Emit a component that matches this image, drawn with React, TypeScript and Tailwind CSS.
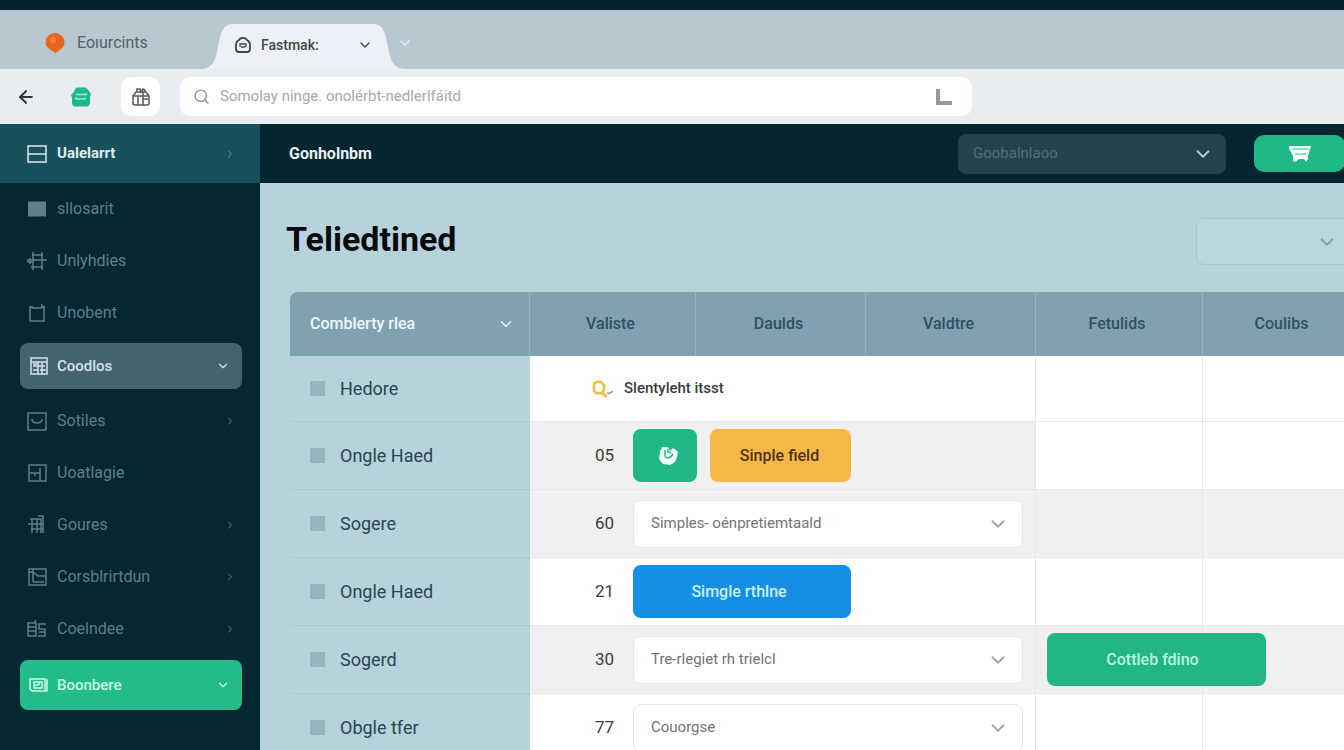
import { ArrowLeft, ChevronDown, ChevronRight, Search } from "lucide-react";
import type { ReactNode } from "react";

type IconProps = { children: ReactNode; className?: string };

const Icon = ({ children, className = "" }: IconProps) => (
    <svg viewBox="0 0 20 20" fill="none" stroke="currentColor" strokeWidth="1.5" className={`size-5 shrink-0 ${className}`} aria-hidden="true">
        {children}
    </svg>
);

const menu = [
    {
        label: "sllosarit",
        arrow: false,
        icon: <path d="M1 2.5h18v15h-3l-1-1-1 1H1z" fill="currentColor" stroke="none" />,
    },
    {
        label: "Unlyhdies",
        arrow: false,
        icon: <path d="M0 9h20M0 11h6M5 4h11M4 16h12M6 1v18M15 1v18M3 7v6" />,
    },
    {
        label: "Unobent",
        arrow: false,
        icon: <path d="M3 3v15h14V3M2 4h4M14 4h4M4 4l2 1h8l2-1M15 1v4" />,
    },
    {
        label: "Coodlos",
        arrow: true,
        box: "gray",
        icon: <path d="M2 2h16v16H2zM2 6h16M4 10h12M4 14h6M9 6v12M13 6v12M11 14h6M4 8h4" />,
    },
    {
        label: "Sotiles",
        arrow: true,
        icon: <path d="M1 2h18v17H1zM5 8c0 3 2 4 5 4s5-1 5-4" />,
    },
    {
        label: "Uoatlagie",
        arrow: false,
        icon: <path d="M2 2h17v16H2zM2 10h11M13 5v13M8 10v3" />,
    },
    {
        label: "Goures",
        arrow: true,
        icon: <path d="M3 4h11v14M5 4v14M1 9h15M4 14h12M10 4v14M11 1h5v17" />,
    },
    {
        label: "Corsblrirtdun",
        arrow: true,
        icon: <path d="M2 2h17v16H2zM6 2v13M6 5l5 4h8M6 15h11M2 5h4" />,
    },
    {
        label: "Coelndee",
        arrow: true,
        icon: <path d="M1 4h8v13H1zM1 8h8M1 12h8M8 1v3M19 5h-7v5h6v7h-7M12 13h6" />,
    },
    {
        label: "Boonbere",
        arrow: true,
        box: "green",
        icon: <path d="M1 4h15v12H3l-2-2zM18 4v12h-3M5 7h8v6H5zM5 10h5M10 7v3" />,
    },
];

const Sidebar = () => {
    return (
        <nav className="flex w-[260px] shrink-0 flex-col bg-[#052731]" aria-label="Main">
            <a href="#" className="flex h-[59px] shrink-0 items-center gap-2.5 bg-[#19505e] pr-[24px] pl-[27px] text-[#dcecef]">
                <Icon><path d="M1 2h18v16H1zM1 10h18" /></Icon>
                <span className="flex-1 text-[15px] font-bold">Ualelarrt</span>
                <ChevronRight size={12} className="text-[#6f9aa5]" />
            </a>
            {menu.map((item) => {
                if (item.box) {
                    const look = item.box === "green" ? "mt-[5px] h-[50px] bg-[#23bb89] text-[#c9fbe5]" : "mt-1 mb-1.5 h-[46px] bg-[#43636f] text-[#d5e3e7]";
                    return (
                        <a key={item.label} href="#" className={`mr-[18px] ml-5 flex shrink-0 items-center gap-2 rounded-lg pr-3 pl-[9px] ${look}`}>
                            <Icon>{item.icon}</Icon>
                            <span className="flex-1 text-[15px] font-medium">{item.label}</span>
                            <ChevronDown size={14} />
                        </a>
                    );
                }
                return (
                    <a key={item.label} href="#" className="flex h-[52px] shrink-0 items-center gap-2.5 pr-[24px] pl-[27px] text-[#5d7f89]">
                        <Icon>{item.icon}</Icon>
                        <span className="flex-1 text-base">{item.label}</span>
                        {item.arrow && <ChevronRight size={12} />}
                    </a>
                );
            })}
        </nav>
    );
};

const BrowserTabs = () => {
    return (
        <div className="flex h-[59px] shrink-0 items-end bg-[#b7c8d0]">
            <button className="flex h-[52px] w-[201px] items-center gap-3 pl-[45px] text-base text-[#53616a]">
                <svg viewBox="0 0 20 20" className="size-5" aria-hidden="true">
                    <path d="M10 0a9.5 9.5 0 0 1 9.500 9.5c0 5-4 6.5-6 8.5l-3 2-3-2c-3-2-7-4-7-8.500A9.5 9.5 0 0 1 10 0z" fill="#e9641c" />
                    <circle cx="8" cy="7" r="3" fill="#f3853f" />
                </svg>
                Eoıurcints
            </button>
            <div className="flex h-[45px] text-[#3f474d]">
                <svg viewBox="0 0 32 45" className="h-[45px] w-8" aria-hidden="true">
                    <path d="M0 45C10 45 14 38 16 28 19 12 20 0 32 0v45z" fill="#edf0f6" />
                </svg>
                <button className="flex w-[140px] items-center bg-[#edf0f6] pb-1">
                    <svg viewBox="0 0 16 16" fill="none" stroke="currentColor" strokeWidth="1.8" className="ml-0.5 size-4" aria-hidden="true">
                        <path d="M4 3C6 0 10 0 12 3c2 1 3 2 3 5v4c0 2-1 3-3 3H4c-2 0-3-1-3-3V8c0-3 1-4 3-5z" />
                        <path d="M5 10V7h6v2l-2 1H6" strokeWidth="1.3" />
                    </svg>
                    <span className="ml-2.5 flex-1 text-left text-sm font-medium">Fastmak:</span>
                    <ChevronDown size={16} />
                </button>
                <svg viewBox="0 0 32 45" className="h-[45px] w-8" aria-hidden="true">
                    <path d="M32 45C22 45 18 38 16 28 13 12 12 0 0 0v45z" fill="#edf0f6" />
                </svg>
            </div>
            <button className="-ml-2 flex h-[52px] items-center text-[#e8f0f4]" aria-label="All tabs">
                <ChevronDown size={16} />
            </button>
        </div>
    );
};

const Toolbar = () => {
    return (
        <div className="flex h-[55px] shrink-0 items-center bg-[#e9edf1] pr-5 pl-4">
            <button aria-label="Back" className="text-[#30383d]">
                <ArrowLeft size={20} strokeWidth={2.5} />
            </button>
            <button aria-label="Store" className="ml-[35px]">
                <svg viewBox="0 0 20 20" className="size-5" aria-hidden="true">
                    <path d="M4 2l2-1.500h9L18 4l2 3-1 3v7l-2 2.500H3L1 17v-6L0 8l3-3z" fill="#1fb886" />
                    <path d="M5 7.500h10l1-1M5 10v2h9v-1.500" stroke="#a5efcf" strokeWidth="1.3" fill="none" />
                </svg>
            </button>
            <button aria-label="Packages" className="ml-[30px] flex size-[39px] items-center justify-center rounded-[10px] bg-white text-[#565b5f]">
                <svg viewBox="0 0 18 20" fill="none" stroke="currentColor" strokeWidth="1.5" className="h-5 w-[18px]" aria-hidden="true">
                    <path d="M4 5h10l3 4v8l-1 1H3l-2-1V9zM1 9h16M6 9v9M11 5v13M11 12h5M5 5V2h3l1 3 2-3 2 1v2" />
                </svg>
            </button>
            <div className="ml-5 flex h-[39px] max-w-[792px] flex-1 items-center rounded-[10px] bg-white pr-5 pl-[13px]">
                <Search size={17} className="text-[#8f9396]" />
                <input
                    type="text"
                    aria-label="Address"
                    placeholder="Somolay ninge. onolérbt-nedlerlfáitd"
                    className="ml-2.5 flex-1 text-[15px] outline-none placeholder:text-[#a6a8aa]"
                />
                <svg viewBox="0 0 16 16" className="size-4" aria-hidden="true">
                    <path d="M2 0v14h14" stroke="#97999b" strokeWidth="4" fill="none" />
                </svg>
            </div>
        </div>
    );
};

type PickerProps = { label: string; value: string; look: string; arrow: string };

const Picker = ({ label, value, look, arrow }: PickerProps) => (
    <div className="grid shrink-0 items-center">
        <select aria-label={label} className={`col-start-1 row-start-1 appearance-none rounded-lg ${look}`}>
            <option>{value}</option>
        </select>
        <ChevronDown size={22} className={`pointer-events-none col-start-1 row-start-1 justify-self-end ${arrow}`} />
    </div>
);

const CellPicker = ({ label, value }: { label: string; value: string }) => (
    <Picker
        label={label}
        value={value}
        look="h-12 w-[390px] border border-[#e6e6e6] bg-white px-[17px] text-[15px] text-[#737373]"
        arrow="mr-3.5 text-[#a3a3a3]"
    />
);

const rows = [
    { name: "Hedore", number: "", shade: "bg-white", rest: "bg-white" },
    { name: "Ongle Haed", number: "05", shade: "bg-[#f0f0f0]", rest: "bg-white" },
    { name: "Sogere", number: "60", shade: "bg-[#f0f0f0]", rest: "bg-[#f0f0f0]" },
    { name: "Ongle Haed", number: "21", shade: "bg-white", rest: "bg-white" },
    { name: "Sogerd", number: "30", shade: "bg-[#f0f0f0]", rest: "bg-[#f0f0f0]" },
    { name: "Obgle tfer", number: "77", shade: "bg-white", rest: "bg-white" },
];

const controls = [
    <div className="flex items-center gap-2.5 pl-[62px] text-[15px] font-medium text-[#3c3c3c]">
        <svg viewBox="0 0 22 18" fill="none" className="h-[18px] w-[22px]" aria-hidden="true">
            <path d="M4 2h5l3 3v5l-2 3H4l-2-2V4zM10 13l5 4" stroke="#f6bd3c" strokeWidth="2.5" />
            <path d="M15 13c2 1 4 0 6-2" stroke="#9b9b9b" strokeWidth="1.5" />
        </svg>
        Slentyleht itsst
    </div>,
    <div className="flex gap-[13px]">
        <button aria-label="Sync" className="flex h-[53px] w-16 items-center justify-center rounded-lg bg-[#1fb886] pl-1.5">
            <svg viewBox="0 0 20 20" className="size-5" aria-hidden="true">
                <path d="M4 1h6l2 4 3-3 3 2 2 2-1 5-2 5-5 3-7-1-4-5 1-7z" fill="#f1fff9" />
                <path d="M7 4v5c0 4 5 4 8-1M10 3v3l3 1" stroke="#1fb886" strokeWidth="1.5" fill="none" />
            </svg>
        </button>
        <button className="h-[53px] w-[141px] rounded-lg bg-[#f5b746] pr-0.5 text-base font-medium text-[#4b3410]">Sinple field</button>
    </div>,
    <CellPicker label="Sogere value" value="Simples- oénpretiemtaald" />,
    <button className="h-[53px] w-[218px] rounded-lg bg-[#148fe4] pr-1.5 text-base font-medium text-[#c9efff]">Simgle rthlne</button>,
    <CellPicker label="Sogerd value" value="Tre-rlegiet rh trielcl" />,
    <CellPicker label="Obgle value" value="Couorgse" />,
];

const DataTable = () => {
    const heads = ["Valiste", "Daulds", "Valdtre", "Fetulids", "Coulibs"];
    return (
        <table className="w-full min-w-[1075px] table-fixed border-separate border-spacing-0">
            <colgroup>
                <col className="w-[240px]" />
                <col className="w-[166px]" />
                <col className="w-[170px]" />
                <col className="w-[170px]" />
                <col className="w-[167px]" />
                <col className="w-[162px]" />
            </colgroup>
            <thead>
                <tr className="h-16 text-base text-[#2f5260]">
                    <th className="rounded-tl-lg border-r border-[#94b6c2] bg-[#7fa1b0] pr-3.5 pl-5 font-medium text-[#eef7fa]">
                        <span className="flex items-center justify-between">
                            Comblerty rlea
                            <ChevronDown size={18} />
                        </span>
                    </th>
                    {heads.map((head) => (
                        <th key={head} className="border-r border-[#94b6c2] bg-[#7fa1b0] py-0 pr-1 pl-0 font-medium">{head}</th>
                    ))}
                </tr>
            </thead>
            <tbody>
                {rows.map((row, i) => (
                    <tr key={i} className="h-[68px] first:h-[66px]">
                        <td className="border-b border-[#a9c9d3] p-0 pl-5">
                            <label className="flex items-center gap-[15px] text-lg text-[#274450]">
                                <input type="checkbox" className="size-[15px] appearance-none bg-[#96b5be]" />
                                {row.name}
                            </label>
                        </td>
                        <td colSpan={3} className={`border-r border-b border-[#e6e7e8] p-0 ${row.shade}`}>
                            <div className="flex items-center">
                                {row.number && <span className="mr-[19px] w-[84px] text-right text-[17px] text-[#3b3b3b]">{row.number}</span>}
                                {controls[i]}
                            </div>
                        </td>
                        <td className={`border-r border-b border-[#e6e7e8] p-0 pl-[11px] ${row.rest}`}>
                            {row.number === "30" && (
                                <button className="relative z-10 block h-[53px] w-[219px] rounded-lg bg-[#22b685] pr-2 text-base font-medium text-[#b9f5dc]">
                                    Cottleb fdino
                                </button>
                            )}
                        </td>
                        <td className={`border-b border-[#e6e7e8] p-0 ${row.rest}`}></td>
                    </tr>
                ))}
            </tbody>
        </table>
    );
};

const App = () => {
    return (
        <div className="flex h-screen flex-col overflow-hidden bg-[#b6d3dc] font-[Roboto,'Liberation_Sans',sans-serif]">
            <div className="h-2.5 shrink-0 bg-[#04232e]"></div>
            <BrowserTabs />
            <Toolbar />
            <div className="flex min-h-0 flex-1">
                <Sidebar />
                <main className="min-w-0 flex-1 overflow-hidden">
                    <header className="flex h-[59px] items-center bg-[#052530] pl-[29px]">
                        <span className="flex-1 text-base font-bold text-[#e8f0f2]">Gonholnbm</span>
                        <Picker
                            label="Workspace"
                            value="Goobalnlaoo"
                            look="h-10 w-[268px] bg-[#24424e] px-[15px] text-[15px] text-[#527079]"
                            arrow="mr-3 text-[#b7c8ce]"
                        />
                        <button aria-label="Cart" className="-mr-px ml-7 flex h-[37px] w-[91px] shrink-0 items-center justify-center rounded-[10px] bg-[#1fb886]">
                            <svg viewBox="0 0 22 18" className="h-[18px] w-[22px]" aria-hidden="true">
                                <path d="M0 1h22l-3 10v3l-2 3-2-3h-5l-3 3-3-1v-5L2 7 0 4z" fill="#f2fff9" />
                                <path d="M3 4h17M6 9h11" stroke="#6fd3b0" strokeWidth="1.3" />
                            </svg>
                        </button>
                    </header>
                    <div className="-mr-3 flex h-[109px] items-center justify-between pt-2 pl-[26px]">
                        <h1 className="pb-1 text-[34px] font-bold text-[#060a0c]">Teliedtined</h1>
                        <Picker
                            label="Filter"
                            value=""
                            look="h-[47px] w-[160px] border border-[#a5c5ce] bg-[#b9d8de] px-4"
                            arrow="mr-[18px] text-[#82a0aa]"
                        />
                    </div>
                    <div className="pl-[30px]">
                        <DataTable />
                    </div>
                </main>
            </div>
        </div>
    );
};

export default App;
